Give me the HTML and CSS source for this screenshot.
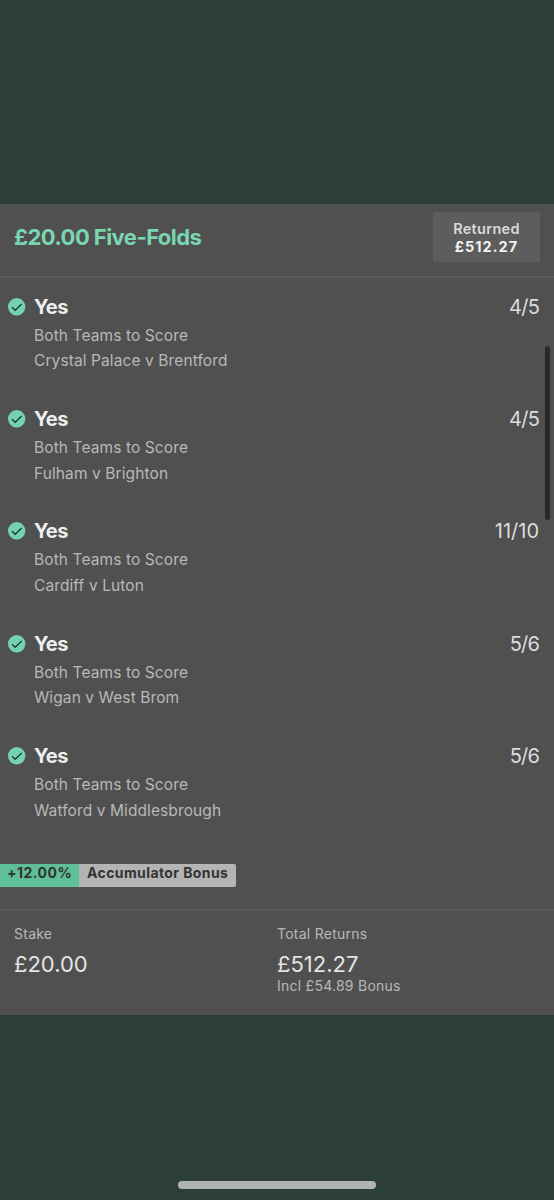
FILE: index.html
```html
<!DOCTYPE html>
<html lang="en">
<head>
  <meta charset="UTF-8" />
  <title>My Bets</title>
  <link rel="stylesheet" href="styles.css">
</head>
<body>
  <svg width="0" height="0" class="sprite">
    <symbol id="tick" viewBox="0 0 18 18">
      <circle cx="8.7" cy="8.8" r="8.7" fill="#74d3ae" />
      <path d="M4 9.2 L7.2 12.3 L13.7 6" fill="none" stroke="#173d2c" stroke-width="1.3" />
    </symbol>
  </svg>

  <div class="bet">
    <div class="header">
      <div class="title">£20.00 Five-Folds</div>
      <div class="returned">
        <div class="returned-label">Returned</div>
        <div class="returned-value">£512.27</div>
      </div>
    </div>

    <div class="selections">
      <div class="selection">
        <svg class="tick"><use href="#tick" /></svg>
        <div class="details">
          <div class="pick">Yes</div>
          <div class="info">Both Teams to Score</div>
          <div class="info">Crystal Palace v Brentford</div>
        </div>
        <div class="odds">4/5</div>
      </div>
      <div class="selection">
        <svg class="tick"><use href="#tick" /></svg>
        <div class="details">
          <div class="pick">Yes</div>
          <div class="info">Both Teams to Score</div>
          <div class="info">Fulham v Brighton</div>
        </div>
        <div class="odds">4/5</div>
      </div>
      <div class="selection">
        <svg class="tick"><use href="#tick" /></svg>
        <div class="details">
          <div class="pick">Yes</div>
          <div class="info">Both Teams to Score</div>
          <div class="info">Cardiff v Luton</div>
        </div>
        <div class="odds odds-long">11/10</div>
      </div>
      <div class="selection">
        <svg class="tick"><use href="#tick" /></svg>
        <div class="details">
          <div class="pick">Yes</div>
          <div class="info">Both Teams to Score</div>
          <div class="info">Wigan v West Brom</div>
        </div>
        <div class="odds">5/6</div>
      </div>
      <div class="selection">
        <svg class="tick"><use href="#tick" /></svg>
        <div class="details">
          <div class="pick">Yes</div>
          <div class="info">Both Teams to Score</div>
          <div class="info">Watford v Middlesbrough</div>
        </div>
        <div class="odds">5/6</div>
      </div>
    </div>

    <div class="bonus">
      <div class="bonus-percent">+12.00%</div>
      <div class="bonus-name">Accumulator Bonus</div>
    </div>

    <div class="footer">
      <div class="total">
        <div class="label">Stake</div>
        <div class="amount">£20.00</div>
      </div>
      <div class="total">
        <div class="label">Total Returns</div>
        <div class="amount">£512.27</div>
        <div class="incl">Incl £54.89 Bonus</div>
      </div>
    </div>

    <div class="scrollbar"></div>
  </div>

  <div class="home-bar"></div>
</body>
</html>
```
FILE: styles.css
```css
* {
  box-sizing: border-box;
}

html, body {
  margin: 0;
  height: 100%;
  overflow: hidden;
}

body {
  display: flex;
  flex-direction: column;
  align-items: center;
  justify-content: space-between;
  padding: 204px 0 11px;
  background: #2b3f36;
  font-family: Inter, sans-serif;
  white-space: nowrap;
}

.sprite {
  position: absolute;
}

.bet {
  position: relative;
  width: 100%;
  height: 811px;
  background: #505050;
}

.header {
  display: flex;
  justify-content: space-between;
  height: 74px;
  padding: 8px 14px 0;
  border-bottom: 2px solid #5a5a5a;
}

.title {
  font-size: 22px;
  font-weight: 700;
  line-height: 50px;
  letter-spacing: -0.55px;
  color: #7ad5b1;
}

.returned {
  width: 107px;
  height: 50px;
  padding-top: 8px;
  background: #5d5d5d;
  border-radius: 2px;
  text-align: center;
  font-size: 14.5px;
  font-weight: 600;
  line-height: 18px;
}

.returned-label {
  color: #dadada;
  letter-spacing: 0.3px;
}

.returned-value {
  font-weight: 700;
  color: #f2f2f2;
  letter-spacing: 1px;
}

.selection {
  display: flex;
  height: 112.4px;
  padding: 13.5px 15px 0 8px;
}

.tick {
  width: 18px;
  height: 18px;
  margin: 6px 8px 0 0;
}

.details {
  flex: 1;
}

.pick {
  font-size: 20px;
  font-weight: 700;
  line-height: 31px;
  letter-spacing: -0.6px;
  color: #eee;
}

.info {
  font-size: 15.5px;
  line-height: 25.8px;
  color: #b8b8b8;
  letter-spacing: 0.1px;
}

.odds {
  font-size: 20px;
  line-height: 31px;
  letter-spacing: -0.8px;
  color: #ddd;
}

.odds-long {
  letter-spacing: 0;
}

.bonus {
  display: flex;
  height: 23px;
  margin-top: 24px;
  font-size: 14px;
  font-weight: 700;
  line-height: 18px;
  letter-spacing: 0.4px;
  color: #333;
}

.bonus-percent {
  width: 79px;
  padding-left: 7px;
  letter-spacing: 0.5px;
  background: #5fbf98;
}

.bonus-name {
  width: 157px;
  padding-left: 8px;
  background: #b4b4b4;
  border-radius: 0 2px 2px 0;
}

.footer {
  display: grid;
  grid-template-columns: 263px 1fr;
  margin-top: 22px;
  padding: 13px 14px 0;
  border-top: 2px solid #5a5a5a;
}

.label, .incl {
  font-size: 14px;
  line-height: 20px;
  letter-spacing: 0.25px;
  color: #b8b8b8;
}

.amount {
  font-size: 22px;
  line-height: 40px;
  color: #e4e4e4;
}

.incl {
  line-height: 16px;
  margin-top: -6px;
}

.scrollbar {
  position: absolute;
  top: 142px;
  right: 4px;
  width: 5px;
  height: 174px;
  border-radius: 3px;
  background: #292929;
}

.home-bar {
  width: 198px;
  height: 8px;
  border-radius: 4px;
  background: #b2b4b2;
}
```
